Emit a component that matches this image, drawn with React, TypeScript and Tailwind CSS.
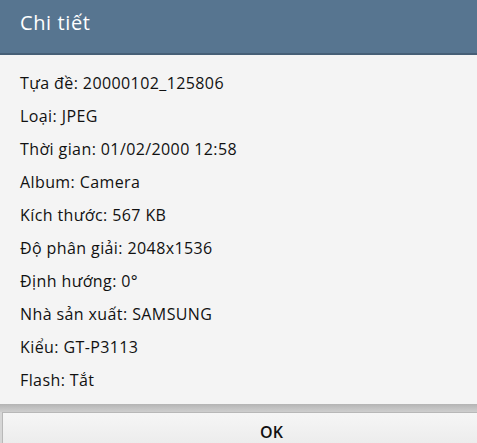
import React from 'react';

const rows: [string, string][] = [
  ['Tựa đề', '20000102_125806'],
  ['Loại', 'JPEG'],
  ['Thời gian', '01/02/2000 12:58'],
  ['Album', 'Camera'],
  ['Kích thước', '567 KB'],
  ['Độ phân giải', '2048x1536'],
  ['Định hướng', '0°'],
  ['Nhà sản xuất', 'SAMSUNG'],
  ['Kiểu', 'GT-P3113'],
  ['Flash', 'Tắt'],
];

const App: React.FC = () => {
  return (
    <div className="w-[477px] h-[443px] overflow-hidden bg-[#f4f4f4] flex flex-col font-['Open_Sans',sans-serif]">
      {/* Title bar */}
      <div className="h-[55px] shrink-0 bg-[#577590] border-b-2 border-[#465f76] flex items-center pl-5">
        <span className="text-white text-[20px] tracking-[0.6px] -mt-2">Chi tiết</span>
      </div>

      {/* Details */}
      <div className="pt-[11px] pb-[7px] pl-5 text-[#111] text-[16px] tracking-[0.4px]">
        {rows.map(([k, v]) => (
          <div key={k} className="h-[33.1px] flex items-center">
            {k}: {v}
          </div>
        ))}
      </div>

      {/* Button bar */}
      <div className="h-[8px] shrink-0 bg-gradient-to-b from-[#b4b4b4] to-[#cfcfcf]" />
      <div className="flex-1 bg-[#d6d6d6] pl-[2px]">
        <button className="w-[538px] h-full bg-gradient-to-b from-[#f6f6f6] to-[#ececec] border-l border-t border-[#b8b8b8] text-[#111] font-semibold text-[16px] flex justify-center pt-[7px]">
          OK
        </button>
      </div>
    </div>
  );
};

export default App;
